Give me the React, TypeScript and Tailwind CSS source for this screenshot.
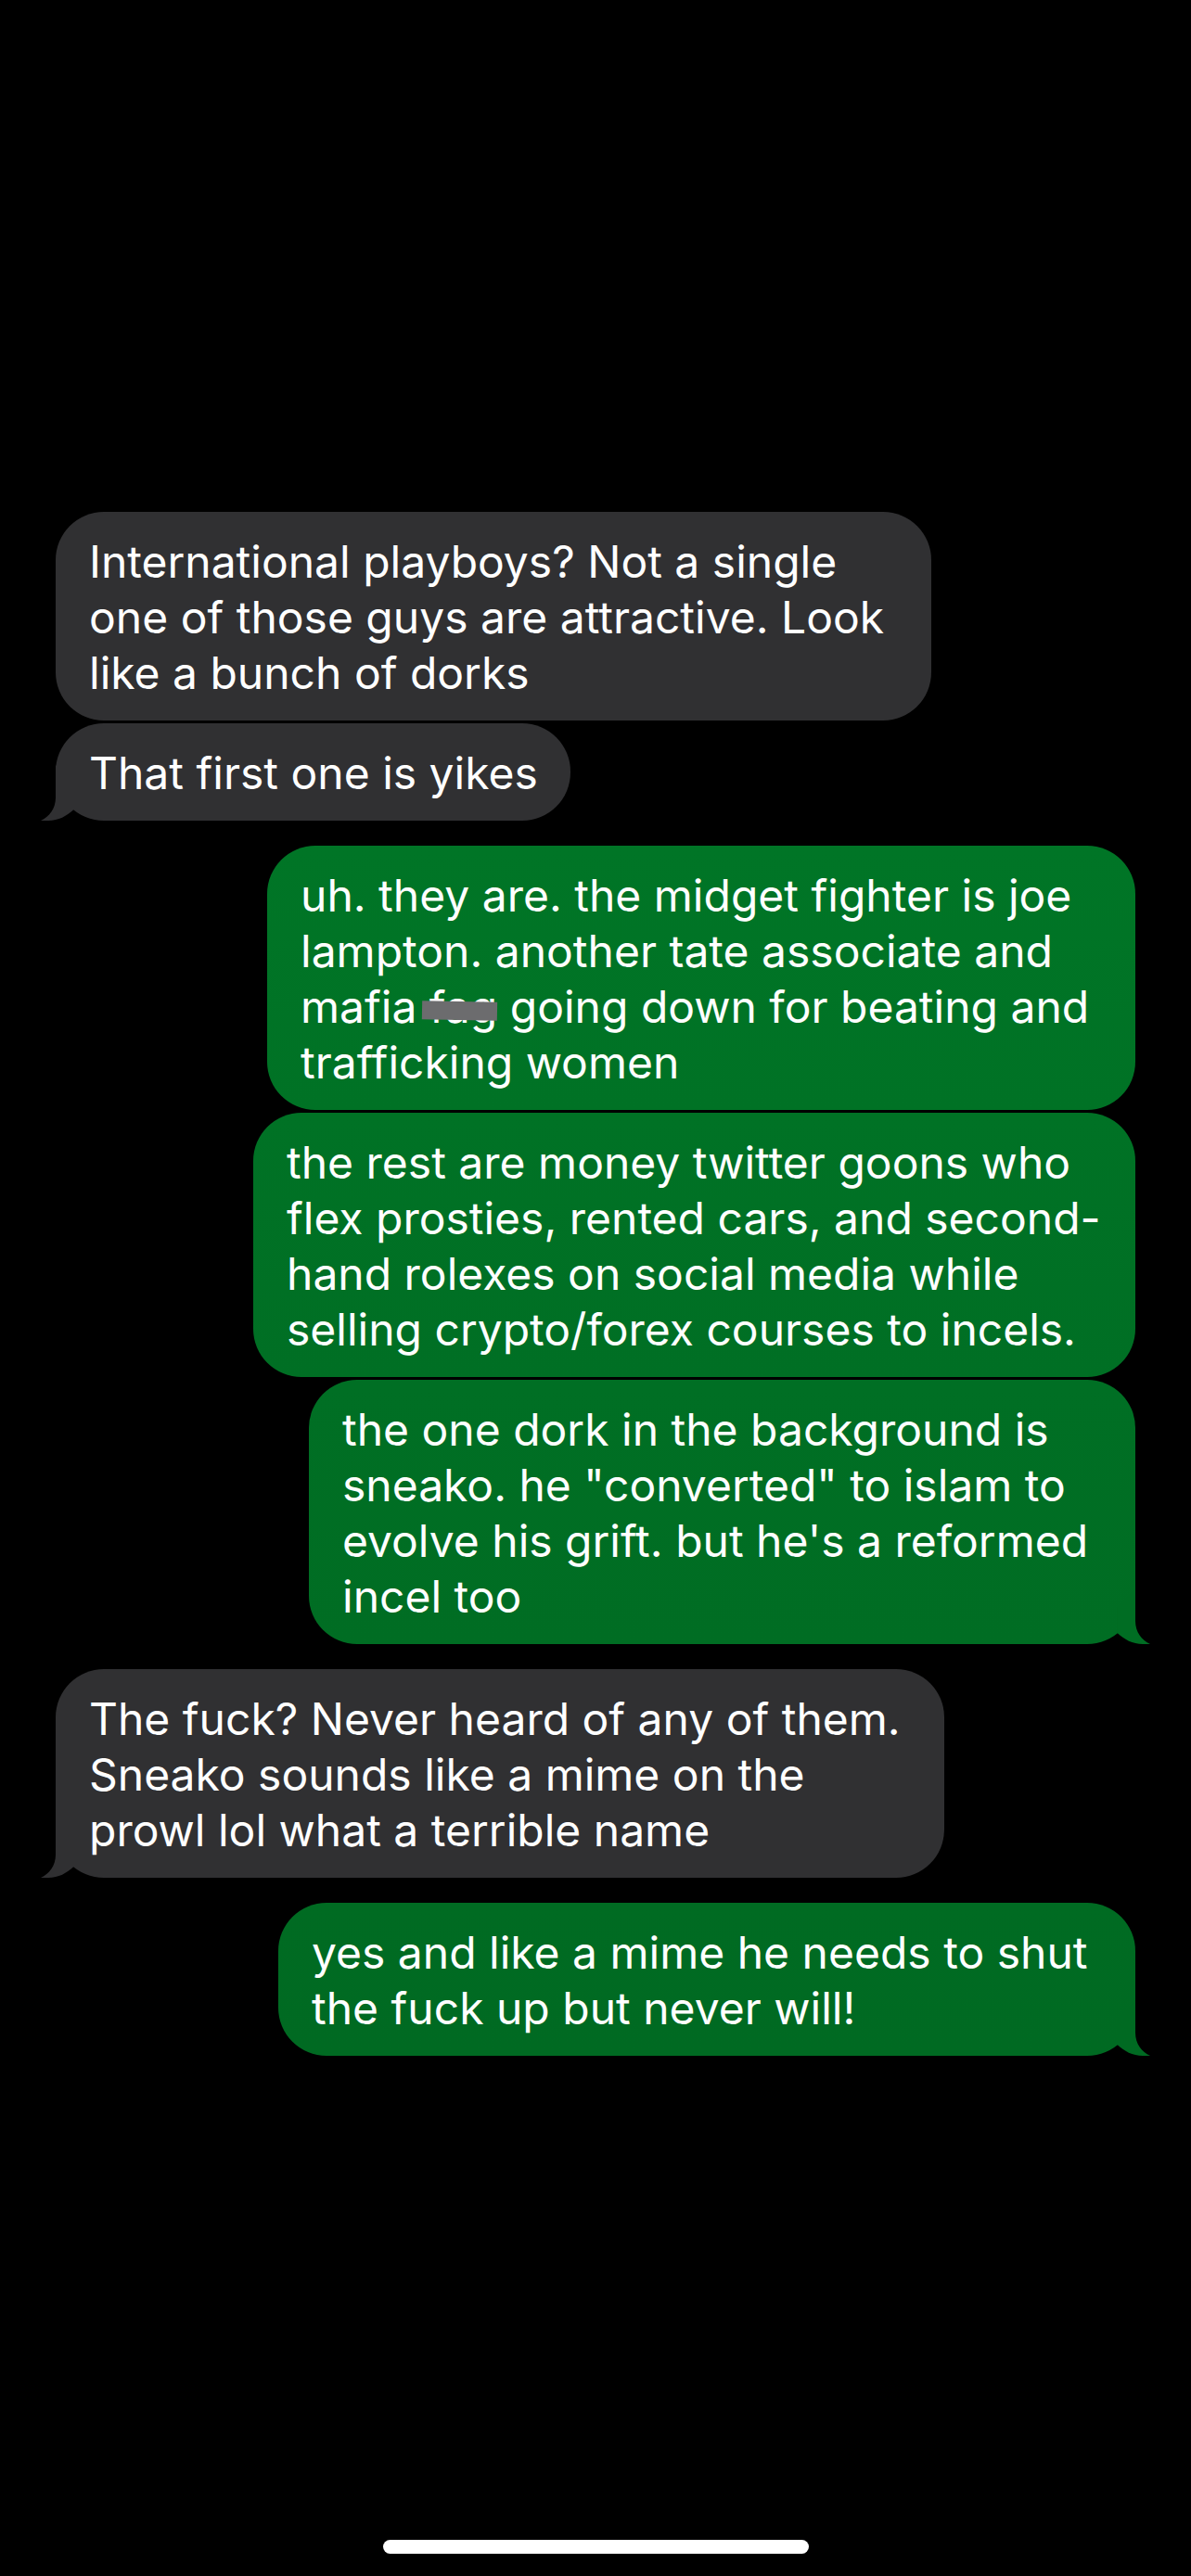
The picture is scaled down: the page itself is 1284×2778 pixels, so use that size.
import React from 'react';
import clsx from 'clsx';

type Message = {
  id: number;
  sent: boolean;
  lines: React.ReactNode[];
  width: string;
  color: string;
  tailColor: string;
  tail?: boolean;
};

const Struck = ({ children }: { children: React.ReactNode }) => (
  <span className="relative inline-block">
    {children}
    <span className="absolute -left-2 right-0 top-6 h-5 rotate-1 bg-[#6c6c6e]" />
  </span>
);

const messages: Message[] = [
  {
    id: 1,
    sent: false,
    lines: ['International playboys? Not a single', 'one of those guys are attractive. Look', 'like a bunch of dorks'],
    width: 'w-[944px]',
    color: 'bg-[#303032]',
    tailColor: 'text-[#303032]',
  },
  {
    id: 2,
    sent: false,
    lines: ['That first one is yikes'],
    width: 'w-[555px]',
    color: 'bg-[#303032]',
    tailColor: 'text-[#303032]',
    tail: true,
  },
  {
    id: 3,
    sent: true,
    lines: [
      'uh. they are. the midget fighter is joe',
      'lampton. another tate associate and',
      <>mafia <Struck>fag</Struck> going down for beating and</>,
      'trafficking women',
    ],
    width: 'w-[936px]',
    color: 'bg-linear-to-b from-[#007526] to-[#007225]',
    tailColor: 'text-[#007225]',
  },
  {
    id: 4,
    sent: true,
    lines: [
      'the rest are money twitter goons who',
      'flex prosties, rented cars, and second-',
      'hand rolexes on social media while',
      'selling crypto/forex courses to incels.',
    ],
    width: 'w-[951px]',
    color: 'bg-linear-to-b from-[#007225] to-[#006f24]',
    tailColor: 'text-[#006f24]',
  },
  {
    id: 5,
    sent: true,
    lines: [
      'the one dork in the background is',
      'sneako. he "converted" to islam to',
      "evolve his grift. but he's a reformed",
      'incel too',
    ],
    width: 'w-[891px]',
    color: 'bg-linear-to-b from-[#006f24] to-[#006d23]',
    tailColor: 'text-[#006d23]',
    tail: true,
  },
  {
    id: 6,
    sent: false,
    lines: ['The fuck? Never heard of any of them.', 'Sneako sounds like a mime on the', 'prowl lol what a terrible name'],
    width: 'w-[958px]',
    color: 'bg-[#303032]',
    tailColor: 'text-[#303032]',
    tail: true,
  },
  {
    id: 7,
    sent: true,
    lines: ['yes and like a mime he needs to shut', 'the fuck up but never will!'],
    width: 'w-[924px]',
    color: 'bg-linear-to-b from-[#006b22] to-[#006a22]',
    tailColor: 'text-[#006a22]',
    tail: true,
  },
];

const Tail = ({ sent, color }: { sent: boolean; color: string }) => (
  <svg
    viewBox="0 0 52 60"
    className={clsx('absolute bottom-0 h-[60px] w-[52px]', color, sent ? '-right-4' : '-left-4 -scale-x-100')}
    fill="currentColor"
    aria-hidden="true"
  >
    <path d="M36 0V35C36 47 43 56 52 60H44C33 60 24 55 16.5 48V20Z" />
  </svg>
);

const Bubble = ({ message }: { message: Message }) => (
  <li
    className={clsx(
      'relative max-w-full rounded-[52px] pl-9 pt-6 pb-[21px]',
      message.width,
      message.color,
      message.sent ? 'self-end' : 'self-start',
      message.tail ? 'mb-[27px]' : 'mb-[3px]'
    )}
  >
    {message.tail && <Tail sent={message.sent} color={message.tailColor} />}
    <p className="relative whitespace-nowrap text-5xl leading-[60px] text-white">
      {message.lines.map((line, index) => (
        <span key={index} className="block">{line}</span>
      ))}
    </p>
  </li>
);

const App = () => {
  return (
    <div className="flex min-h-screen flex-col bg-black font-['Inter',sans-serif]">
      {/* Conversation */}
      <main className="flex-1 px-[60px] pt-[552px]">
        <ul className="flex flex-col">
          {messages.map((message) => (
            <Bubble key={message.id} message={message} />
          ))}
        </ul>
      </main>

      {/* Home indicator */}
      <footer className="flex justify-center pb-6">
        <div className="h-[15px] w-[459px] rounded-full bg-white" />
      </footer>
    </div>
  );
};

export default App;
